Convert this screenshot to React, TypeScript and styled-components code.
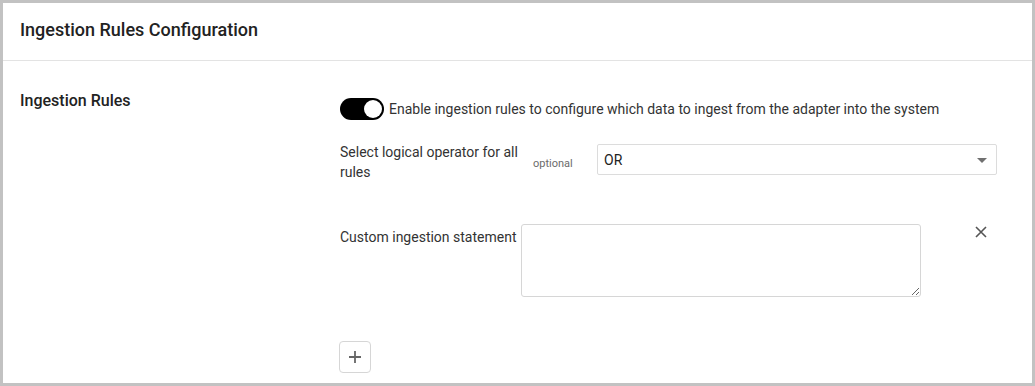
import styled, { createGlobalStyle } from 'styled-components';

const GlobalStyle = createGlobalStyle`
  html, body {
    margin: 0;
    padding: 0;
    background: #fff;
  }
  body {
    font-family: Roboto, "Liberation Sans", Arial, sans-serif;
    color: #333;
  }
`;

const Frame = styled.div`
  box-sizing: border-box;
  width: 1035px;
  height: 386px;
  border: 3px solid #c2c2c2;
  background: #fff;
  overflow: hidden;
`;

const Header = styled.div`
  box-sizing: border-box;
  height: 58px;
  display: flex;
  align-items: center;
  padding: 0 0 4px 17px;
  border-bottom: 1px solid #e3e3e3;
`;

const Title = styled.h2`
  margin: 0;
  font-size: 18px;
  font-weight: 500;
  color: #222;
`;

const Body = styled.div`
  display: grid;
  grid-template-columns: 320px 1fr;
  padding: 30px 0 0 17px;
`;

const SectionLabel = styled.div`
  font-size: 16px;
  font-weight: 500;
  line-height: 20px;
  color: #222;
`;

const Fields = styled.div`
  display: flex;
  flex-direction: column;
`;

const Row = styled.div<{ top: number }>`
  display: flex;
  align-items: flex-start;
  margin-top: ${(p) => p.top}px;
`;

const ToggleRow = styled.label`
  display: flex;
  align-items: center;
  gap: 5px;
  margin-top: 7px;
  font-size: 14px;
  line-height: 22px;
  color: #333;
`;

const Track = styled.span<{ on: boolean }>`
  position: relative;
  display: inline-block;
  width: 44px;
  height: 22px;
  border-radius: 11px;
  background: ${(p) => (p.on ? '#000' : '#ccc')};
  flex-shrink: 0;
`;

const Knob = styled.span<{ on: boolean }>`
  position: absolute;
  top: 2px;
  left: ${(p) => (p.on ? '24px' : '2px')};
  width: 18px;
  height: 18px;
  border-radius: 50%;
  background: #fff;
`;

const FieldLabel = styled.div<{ width: number; top?: number }>`
  width: ${(p) => p.width}px;
  flex-shrink: 0;
  font-size: 14px;
  line-height: 20px;
  color: #333;
  margin-top: ${(p) => p.top ?? 0}px;
`;

const Optional = styled.div`
  width: 64px;
  margin-top: 14px;
  font-size: 11px;
  line-height: 16px;
  color: #6b6b6b;
`;

const Select = styled.div`
  box-sizing: border-box;
  width: 400px;
  height: 31px;
  margin-top: 2px;
  border: 1px solid #dcdcdc;
  border-radius: 2px;
  display: flex;
  align-items: center;
  justify-content: space-between;
  padding: 0 9px 0 6px;
  font-size: 14px;
  color: #222;
`;

const Arrow = styled.span`
  width: 0;
  height: 0;
  border-left: 5px solid transparent;
  border-right: 5px solid transparent;
  border-top: 5px solid #707070;
  margin-top: 1px;
`;

const TextArea = styled.textarea`
  box-sizing: border-box;
  width: 400px;
  height: 73px;
  border: 1px solid #d6d6d6;
  border-radius: 3px;
  padding: 6px;
  font-family: inherit;
  font-size: 14px;
  outline: none;
`;

const IconButton = styled.button`
  background: none;
  border: none;
  padding: 0;
  margin: 2px 0 0 54px;
  width: 12px;
  height: 12px;
  display: flex;
  cursor: pointer;
`;

const AddButton = styled.button`
  box-sizing: border-box;
  width: 32px;
  height: 32px;
  margin: 44px 0 0 -1px;
  border: 1px solid #d6d6d6;
  border-radius: 4px;
  background: #fff;
  display: flex;
  align-items: center;
  justify-content: center;
  padding: 0;
  cursor: pointer;
`;

export default function App() {
  return (
    <>
      <GlobalStyle />
      <Frame>
        <Header>
          <Title>Ingestion Rules Configuration</Title>
        </Header>
        <Body>
          <SectionLabel>Ingestion Rules</SectionLabel>
          <Fields>
            <ToggleRow>
              <Track on>
                <Knob on />
              </Track>
              Enable ingestion rules to configure which data to ingest from the adapter into the system
            </ToggleRow>
            <Row top={22}>
              <FieldLabel width={193}>Select logical operator for all rules</FieldLabel>
              <Optional>optional</Optional>
              <Select>
                OR
                <Arrow />
              </Select>
            </Row>
            <Row top={42}>
              <FieldLabel width={181} top={3}>
                Custom ingestion statement
              </FieldLabel>
              <TextArea />
              <IconButton aria-label="remove">
                <svg width="12" height="12" viewBox="0 0 12 12">
                  <path d="M1 1 L11 11 M11 1 L1 11" stroke="#555" strokeWidth="1.6" />
                </svg>
              </IconButton>
            </Row>
            <AddButton aria-label="add">
              <svg width="12" height="12" viewBox="0 0 12 12">
                <path d="M6 0 V12 M0 6 H12" stroke="#666" strokeWidth="1.8" />
              </svg>
            </AddButton>
          </Fields>
        </Body>
      </Frame>
    </>
  );
}
